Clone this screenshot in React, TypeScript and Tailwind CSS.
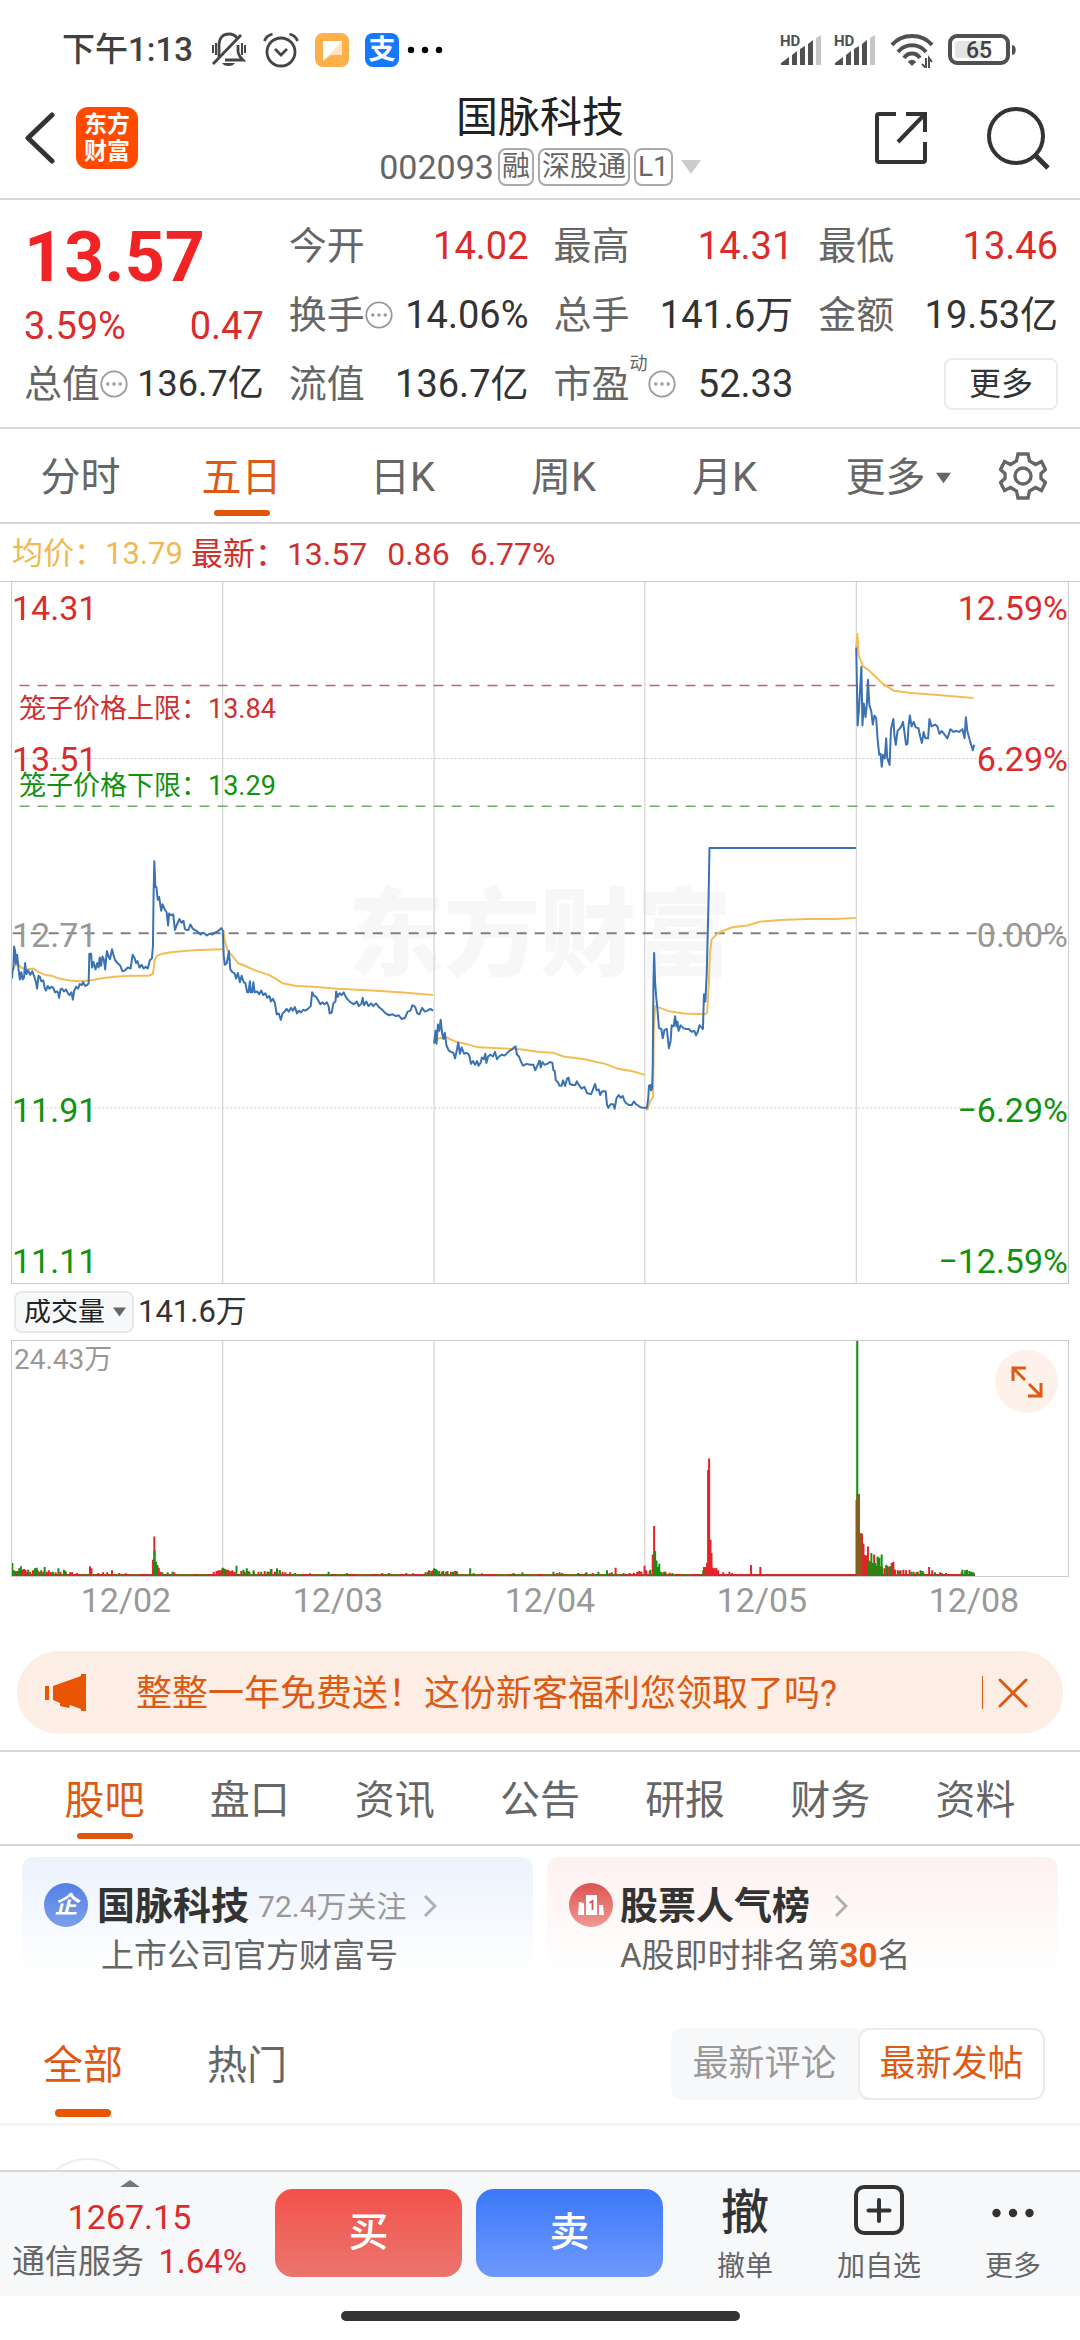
import React, { useState } from 'react';
import clsx from 'clsx';

// Chart units: one trading day is about 614 wide, price plot 1529 high, volume plot 708 high.
const HALF = 1568;
const DAY_LINES = [646, 1261, 1874, 2489];

const sessions = [
  {
    x: 0,
    avg: '33,868 50,858 60,866 75,870 95,868 110,876 130,882 150,884 170,890 200,894 230,896 260,894 290,890 330,886 380,884 430,884 443,880 448,850 455,840 470,836 500,832 560,828 646,826',
    price:
      '33,890 35,870 37,870 39,820 42,830 44,858 48,838 52,870 56,892 60,876 64,892 68,888 71,856 75,880 80,872 86,882 92,874 97,884 102,896 106,912 110,884 114,886 118,896 124,894 128,910 132,916 137,906 142,912 148,908 153,910 158,920 163,918 167,920 170,932 174,914 178,912 184,918 190,914 196,922 200,926 206,920 210,936 214,916 220,908 225,912 230,902 236,904 240,898 246,906 252,904 256,900 258,836 263,836 266,866 270,854 276,870 281,856 285,866 288,844 292,862 296,842 300,848 304,870 309,830 314,842 318,848 324,826 328,838 333,850 340,856 348,862 354,874 362,872 370,866 378,868 384,838 389,844 394,856 398,852 404,866 410,860 416,868 422,864 428,868 434,850 440,846 443,820 445,700 447,634 450,690 453,690 457,718 461,712 467,742 471,728 478,740 483,746 487,774 490,748 496,752 502,750 507,784 513,772 520,760 526,768 532,764 536,782 541,784 546,784 552,772 558,780 564,784 570,786 576,790 582,794 588,790 594,792 600,796 608,792 616,794 622,790 630,788 636,784 642,780 646,784',
  },
  {
    x: 0,
    avg: '648,784 652,808 660,828 680,846 690,856 710,862 740,872 780,882 800,890 820,900 860,906 910,908 980,912 1080,916 1160,920 1258,926',
    price:
      '646,784 649,840 652,860 658,856 664,830 668,870 674,876 680,878 685,890 690,878 696,898 701,884 707,898 712,900 717,920 721,920 725,896 728,920 732,920 735,898 739,920 746,918 752,924 758,916 764,926 770,922 776,932 782,928 786,940 792,934 798,944 803,968 809,966 815,980 820,966 826,962 832,956 838,962 845,954 850,960 856,952 862,966 868,960 874,964 880,958 886,960 894,956 902,950 906,920 912,928 918,930 924,938 930,946 936,942 942,946 949,942 954,950 957,966 963,964 968,944 974,940 976,918 980,930 986,922 992,926 998,920 1004,930 1010,936 1018,942 1028,946 1036,940 1042,950 1050,944 1053,932 1057,948 1064,940 1070,950 1078,944 1084,950 1092,944 1100,952 1110,958 1120,966 1130,970 1140,968 1150,972 1158,970 1166,978 1176,976 1184,962 1192,960 1198,948 1206,952 1212,966 1218,968 1226,954 1234,962 1242,960 1250,956 1258,960',
  },
  {
    x: 0,
    avg: '1261,1030 1275,1020 1295,1018 1325,1028 1360,1034 1390,1040 1450,1042 1510,1044 1568,1050 1608,1052 1638,1060 1698,1066 1758,1076 1793,1086 1838,1092 1874,1100',
    price:
      '1261,1032 1265,1004 1268,1032 1272,990 1276,1004 1280,980 1284,1008 1288,1022 1292,1008 1297,1036 1303,1046 1310,1050 1317,1052 1322,1064 1327,1046 1331,1030 1336,1054 1341,1040 1348,1054 1354,1052 1360,1054 1364,1060 1368,1076 1374,1070 1380,1078 1386,1070 1390,1080 1396,1074 1400,1062 1406,1066 1410,1054 1413,1074 1418,1060 1424,1056 1432,1060 1438,1050 1444,1066 1450,1060 1458,1056 1466,1058 1474,1052 1480,1048 1488,1044 1494,1040 1498,1038 1502,1056 1508,1060 1514,1072 1520,1080 1530,1076 1540,1078 1550,1078 1555,1090 1560,1082 1568,1068',
  },
  {
    x: HALF,
    avg: '306,1174 314,1176 322,1156 330,1148 332,1000 336,950 350,954 380,962 420,966 480,968 487,965 492,900 495,840 500,805 520,790 560,778 605,774 640,766 700,762 780,760 860,760 920,758',
    price:
      '0,1068 3,1084 8,1072 14,1078 22,1076 30,1072 37,1074 40,1090 44,1092 47,1112 53,1116 58,1124 64,1124 68,1112 74,1124 80,1108 84,1106 88,1120 96,1122 104,1122 108,1114 114,1122 122,1130 130,1126 138,1140 150,1142 156,1130 161,1120 166,1134 172,1132 176,1144 182,1136 192,1136 196,1166 200,1172 206,1164 214,1164 218,1174 224,1150 230,1144 236,1150 242,1146 246,1156 252,1162 260,1166 268,1166 274,1158 280,1164 288,1168 298,1172 312,1172 316,1150 318,1124 322,1122 324,1134 327,1130 329,1080 331,900 333,834 336,900 339,930 343,960 347,998 354,1000 358,1020 363,1002 370,1000 376,1042 381,1026 384,992 390,994 394,972 398,994 401,984 404,1004 410,992 418,998 426,1000 434,1000 442,1006 450,1004 455,1014 460,1006 465,992 470,996 475,1000 478,924 482,940 486,880 491,730 494,605 920,605',
  },
  {
    x: HALF,
    avg: '921,168 924,138 928,185 940,208 955,216 975,230 995,245 1030,262 1080,267 1150,271 1262,278',
    price:
      '921,168 925,338 929,300 932,262 936,210 939,338 943,290 948,320 952,290 955,238 959,292 965,308 969,336 974,316 979,322 983,368 988,402 992,400 995,428 999,402 1004,410 1008,366 1011,408 1018,424 1022,346 1029,324 1032,360 1036,380 1041,350 1046,346 1052,340 1057,330 1061,352 1066,380 1070,378 1073,340 1077,316 1082,340 1088,330 1094,342 1102,344 1107,362 1112,376 1117,352 1122,366 1130,366 1134,324 1140,340 1150,336 1157,340 1163,356 1170,350 1178,358 1186,366 1195,346 1204,352 1212,350 1220,352 1230,346 1236,366 1240,320 1244,350 1252,372 1260,392 1264,380',
  },
];

// x,top pairs of the volume bars
const volumes = [
  {
    x: 0,
    color: '#e0242a',
    bars: '38,872 44,874 48,876 62,870 68,868 72,870 78,876 86,876 94,872 108,872 114,876 124,876 134,876 140,872 146,878 160,878 174,876 190,878 202,878 208,878 222,880 260,860 264,866 284,880 298,878 310,878 324,872 345,880 364,881 443,840 447,770 456,856 460,864 465,876 505,878 620,876 628,874 634,872 640,872 645,866 656,870 662,870 668,874 674,872 680,876 700,874 710,876 720,874 736,876 750,876 768,874 780,876 788,868 798,876 812,872 820,876 828,878 842,878 900,881 1110,880 1180,880 1200,881 1242,876 1246,872 1254,874 1258,872 1270,872 1284,876 1296,876 1310,876 1322,874 1328,878 1400,881',
  },
  {
    x: 0,
    color: '#12920f',
    bars: '34,850 41,874 50,874 54,866 59,860 80,870 100,866 105,864 118,872 128,862 152,876 168,866 184,870 188,874 448,812 452,846 470,878 486,878 500,876 648,864 653,868 686,858 706,870 716,866 724,876 736,872 758,876 776,876 786,868 804,866 812,872 856,880 954,876 1007,880 1130,880 1236,878 1248,874 1261,866 1266,868 1276,874 1288,874 1300,874 1316,876 1326,874 1366,866 1376,880 1492,880 1518,878',
  },
  {
    x: HALF,
    color: '#e0242a',
    bars: '50,880 66,880 134,880 154,880 204,880 221,864 262,880 274,879 284,876 290,874 296,876 305,858 310,872 320,874 329,824 333,738 355,878 366,876 378,879 478,862 484,862 487,850 490,570 493,535 497,780 500,820 503,864 508,866 514,864 519,872 534,878 552,876 560,880 615,856 642,862 922,660 925,642 929,642 934,760 938,762 942,792 947,826 951,828 955,800 962,846 968,858 973,824 980,858 990,860 996,862 1003,866 1012,858 1018,862 1024,850 1029,846 1034,870 1042,872 1050,872 1058,870 1066,872 1076,870 1088,876 1100,876 1116,878 1133,862 1142,872 1165,878 1182,880 1228,876 1264,882',
  },
  {
    x: HALF,
    color: '#12920f',
    bars: '40,876 58,878 112,880 136,878 171,876 196,872 210,878 244,880 322,870 336,814 340,842 344,862 348,852 352,876 362,876 386,880 476,872 924,181 958,842 965,820 970,850 976,850 983,830 988,834 992,866 995,824 1008,856 1020,860 1046,874 1082,876 1096,878 1108,872 1114,874 1150,878 1170,880 1230,870 1238,872 1243,870 1250,874 1256,876 1262,878',
  },
];

const barPath = (bars: string) =>
  bars
    .split(' ')
    .map((b) => {
      const [x, top] = b.split(',');
      return `M${x} 889V${top}`;
    })
    .join('');

const axis = [
  { price: '14.31', pct: '12.59%', pos: 'top-[4px]', color: 'text-[#db2b2b]' },
  { price: '13.51', pct: '6.29%', pos: 'top-1/4 -translate-y-[20px]', color: 'text-[#db2b2b]' },
  { price: '12.71', pct: '0.00%', pos: 'top-1/2 -translate-y-[20px]', color: 'text-[#999]' },
  { price: '11.91', pct: '−6.29%', pos: 'top-3/4 -translate-y-[20px]', color: 'text-[#12920f]' },
  { price: '11.11', pct: '−12.59%', pos: 'bottom-0', color: 'text-[#12920f]' },
];

const Caret = ({ className }: { className?: string }) => (
  <svg viewBox="0 0 20 14" className={className} fill="currentColor" aria-hidden="true">
    <path d="M0 0h20L10 14z" />
  </svg>
);

const Info = () => (
  <svg viewBox="0 0 28 28" className="h-7 w-7 shrink-0" aria-hidden="true">
    <circle cx="14" cy="14" r="12.7" fill="none" stroke="#999" strokeWidth="1.8" />
    <g fill="#999">
      <circle cx="7.8" cy="14" r="1.7" />
      <circle cx="14" cy="14" r="1.7" />
      <circle cx="20.2" cy="14" r="1.7" />
    </g>
  </svg>
);

const Signal = () => (
  <svg viewBox="0 -4 42 36" className="h-9 w-[42px]" aria-hidden="true">
    <text x="0" y="12" fontSize="15" fontWeight="700" fill="#505050" fontFamily="Roboto, sans-serif">HD</text>
    <g fill="#505050">
      <path d="M1 31v-2l8-6v8z" />
      <path d="M12 21l5-4v14h-5z" />
      <path d="M20 15l5-3v19h-5z" />
      <path d="M28 10l5-4v25h-5z" />
    </g>
    <path d="M36 4l5-3v30h-5z" fill="#c6c6c6" />
  </svg>
);

function StatusBar() {
  return (
    <div className="flex h-[84px] items-end justify-between pl-[62px] pr-[62px] pb-[12px] text-[#404040]">
      <div className="flex items-center">
        <span className="w-[149px] text-[33px] leading-[44px] font-medium whitespace-nowrap">下午1:13</span>
        <svg viewBox="0 0 36 36" className="h-9 w-9" fill="none" stroke="#454545" strokeWidth="2.8" aria-hidden="true">
          <path d="M8 25V13C8 6 12 2 18 2c4 0 6 1 8 4M27 13v6c0 4 2 6 5 9H14" />
          <path d="M2 32L30 3" />
          <path d="M2 13v8M5 11v12M31 11v12M34 13v8" strokeWidth="2" />
          <path d="M11 31h13c-2 4-11 4-13 0z" fill="#454545" stroke="none" />
        </svg>
        <svg viewBox="0 0 36 36" className="ml-4 h-9 w-9" fill="none" stroke="#454545" strokeWidth="2.8" aria-hidden="true">
          <circle cx="18" cy="20" r="14" />
          <path d="M12 17l6 6 6-6" />
          <path d="M1.500 9c1-3 4-6 8-7M26.500 2c4 1 7 4 8 7" />
        </svg>
        <svg viewBox="0 0 34 34" className="ml-4 h-[34px] w-[34px]" aria-hidden="true">
          <rect width="34" height="34" rx="8" fill="#feb04a" />
          <path d="M8 8h19v14H16l-8 6z" fill="#ffe5c0" />
          <path d="M8 8h19L8 28z" fill="#fff" />
        </svg>
        <span className="ml-4 flex h-[34px] w-[34px] items-center justify-center rounded-lg bg-[#1677ff] text-[27px] leading-none font-bold text-white">支</span>
        <svg viewBox="0 0 36 8" className="ml-2 h-2 w-9" aria-hidden="true">
          <circle cx="4" cy="4" r="3.2" /><circle cx="18" cy="4" r="3.2" /><circle cx="32" cy="4" r="3.2" />
        </svg>
      </div>
      <div className="flex h-11 items-center">
        <div className="flex gap-3 pb-1">
          <Signal />
          <Signal />
        </div>
        <svg viewBox="0 0 44 36" className="ml-3.5 h-9 w-11" fill="none" stroke="#505050" strokeWidth="4" aria-hidden="true">
          <path d="M2 13c10-12 30-12 40 0M8 20c7-9 21-9 28 0M14 26c4-6 12-6 16 0" />
          <path d="M18 30c2-3 6-3 8 0l-4 4z" fill="#505050" stroke="none" />
          <path d="M36 26v10M32 32l4 4M39 36v-10l3 4" strokeWidth="2" />
        </svg>
        <svg viewBox="0 0 70 32" className="ml-3.5 h-8 w-[70px]" aria-hidden="true">
          <rect x="2" y="2" width="58" height="27" rx="7" fill="none" stroke="#505050" strokeWidth="4" />
          <rect x="7" y="7" width="30" height="17" rx="3" fill="#e4e4e4" />
          <path d="M64 11c5 0 5 10 0 10z" fill="#505050" />
          <text x="31" y="24" textAnchor="middle" fontSize="23" fontWeight="500" fill="#404040" fontFamily="Roboto, sans-serif">65</text>
        </svg>
      </div>
    </div>
  );
}

function Header() {
  const tag = 'flex h-[38px] items-center rounded-lg border-2 border-[#aaa] px-[2px] text-[28px] leading-none';
  return (
    <header className="grid grid-cols-[1fr_auto_1fr] border-b-2 border-[#d8d8d8] px-6 pb-[10px]">
      <div className="flex items-center gap-[21px] pt-[3px]">
        <button aria-label="返回">
          <svg viewBox="0 0 31 52" className="h-[52px] w-[31px]" fill="none" stroke="#333" strokeWidth="5" strokeLinecap="round" strokeLinejoin="round">
            <path d="M28 3L4 26l24 23" />
          </svg>
        </button>
        <div className="flex h-[62px] w-[62px] flex-col items-center justify-center rounded-xl bg-[#ff4a00] text-[23px] leading-[27px] font-bold text-white">
          <span>东方</span>
          <span>财富</span>
        </div>
      </div>
      <div className="text-center">
        <h1 className="pt-[6px] text-[42px] leading-[56px] text-[#222]">国脉科技</h1>
        <div className="flex items-center gap-1 text-[#666]">
          <span className="text-[34px] leading-[42px]">002093</span>
          <span className={tag}>融</span>
          <span className={tag}>深股通</span>
          <span className={tag}>L1</span>
          <Caret className="ml-1 h-[14px] w-5 text-[#ccc]" />
        </div>
      </div>
      <div className="flex items-center justify-end gap-[58px] pt-[3px] pr-[6px]">
        <button aria-label="分享">
          <svg viewBox="0 0 54 54" className="h-[54px] w-[54px]" fill="none" stroke="#333" strokeWidth="4">
            <path d="M22 3H5a2 2 0 0 0-2 2v44a2 2 0 0 0 2 2h44a2 2 0 0 0 2-2V31M32 3h19v18M24 31L50 4" />
          </svg>
        </button>
        <button aria-label="搜索">
          <svg viewBox="0 0 64 64" className="h-16 w-16" fill="none" stroke="#333" strokeWidth="4">
            <circle cx="30" cy="30" r="27" />
            <path d="M49 49l13 13" strokeWidth="5" />
          </svg>
        </button>
      </div>
    </header>
  );
}

interface StatProps {
  label: string;
  value: string;
  info?: boolean;
  sup?: string;
  color?: string;
}

function Stat({ label, value, info, sup, color = 'text-[#333]' }: StatProps) {
  return (
    <div className="flex h-[69px] items-center justify-between whitespace-nowrap">
      <dt className="flex items-center text-[#666]">
        {label}
        {sup && <sup className="-top-5 text-[18px]">{sup}</sup>}
        {info && <Info />}
      </dt>
      <dd className={color}>{value}</dd>
    </div>
  );
}

function Quote() {
  const red = 'text-[#db2b2b]';
  return (
    <section className="border-b-2 border-[#d8d8d8] pt-[11px] pb-[9px] text-[38px] leading-[46px]">
      <dl className="grid grid-cols-4 gap-x-[25px] pr-[22px] pl-6">
        <div>
          <div className="h-[92px] text-[70px] leading-[92px] font-bold text-[#f02424]">13.57</div>
          <div className={clsx('flex h-[46px] justify-between', red)}>
            <span>3.59%</span>
            <span>0.47</span>
          </div>
          <div className="flex h-[69px] items-center justify-between whitespace-nowrap">
            <dt className="flex items-center text-[#666]">总值<Info /></dt>
            <dd className="text-[36px] text-[#333]">136.7亿</dd>
          </div>
        </div>
        <div>
          <Stat label="今开" value="14.02" color={red} />
          <Stat label="换手" value="14.06%" info />
          <Stat label="流值" value="136.7亿" />
        </div>
        <div>
          <Stat label="最高" value="14.31" color={red} />
          <Stat label="总手" value="141.6万" />
          <Stat label="市盈" sup="动" value="52.33" info />
        </div>
        <div>
          <Stat label="最低" value="13.46" color={red} />
          <Stat label="金额" value="19.53亿" />
          <div className="flex h-[69px] items-center justify-end">
            <button className="h-[52px] w-[114px] rounded-lg border-2 border-[#ebebeb] text-[32px] leading-none text-[#333]">更多</button>
          </div>
        </div>
      </dl>
    </section>
  );
}

function Tab({ label, active, onClick }: { label: string; active: boolean; onClick: () => void }) {
  return (
    <button
      onClick={onClick}
      className={clsx('flex flex-1 flex-col items-center pt-5', active ? 'text-[#dd5a14]' : 'text-[#666]')}
    >
      <span className="text-[40px] leading-[58px]">{label}</span>
      <span className={clsx('mt-[3px] h-[6px] w-[56px] rounded-full', active && 'bg-[#e2550c]')} />
    </button>
  );
}

function PeriodTabs() {
  const [active, setActive] = useState('五日');
  return (
    <nav className="flex h-[95px] border-b-2 border-[#d8d8d8]">
      {['分时', '五日', '日K', '周K', '月K'].map((t) => (
        <Tab key={t} label={t} active={t === active} onClick={() => setActive(t)} />
      ))}
      <button aria-haspopup="menu" className="flex w-[180px] items-center justify-center gap-2.5 pt-1 pl-[6px] text-[40px] text-[#666]">
        更多
        <Caret className="h-3 w-[15px]" />
      </button>
      <button aria-label="设置" className="w-[95px] pl-[14px]">
        <svg viewBox="0 0 48 50" className="h-[50px] w-12" fill="none" stroke="#666" strokeWidth="3.400" strokeLinejoin="miter">
          <path d="M19 3h10l1.500 7 6 3.500 6-3 4 8-4.500 4v5l4.500 4-4 8-6-3-6 3.500-1.500 7H19l-1.500-7-6-3.500-6 3-4-8 4.500-4v-5l-4.500-4 4-8 6 3 6-3.500z" />
          <circle cx="24" cy="25" r="8" />
        </svg>
      </button>
    </nav>
  );
}

function PriceChart() {
  return (
    <section>
      <div className="flex h-[58px] items-center border-b border-[#ccc] pt-[3px] pl-3 text-[32px] leading-[44px] text-[#cf3030]">
        <span className="mr-2 text-[31px] text-[#f0b94f]">均价：13.79</span>
        <span>最新：13.57</span>
        <span className="ml-5">0.86</span>
        <span className="ml-5">6.77%</span>
      </div>
      <div className="px-[11px]">
        <div className="relative h-[702px] border-x border-b border-[#ccc]">
          <div className="absolute inset-0 flex items-center justify-center pt-1 text-[96px] font-black text-[#f7f7f7]">东方财富</div>
          <svg viewBox="33 25 3072 1529" preserveAspectRatio="none" className="absolute inset-0 h-full w-full" fill="none" role="img" aria-label="五日分时走势">
            <g stroke="#ccc" strokeWidth="1">
              {DAY_LINES.map((x) => (
                <path key={x} d={`M${x} 25V1554`} vectorEffect="non-scaling-stroke" />
              ))}
            </g>
            <path d="M40 410H3105M40 1172H3105" stroke="#ccc" strokeWidth="1" strokeDasharray="2 2" vectorEffect="non-scaling-stroke" />
            <path d="M55 251H3065" stroke="#bf6565" strokeWidth="1.500" strokeDasharray="10 8" vectorEffect="non-scaling-stroke" />
            <path d="M55 514H3065" stroke="#68ad68" strokeWidth="1.500" strokeDasharray="10 8" vectorEffect="non-scaling-stroke" />
            <path d="M35 791H3090" stroke="#808080" strokeWidth="2" strokeDasharray="10 8" vectorEffect="non-scaling-stroke" />
            {sessions.map((s) => (
              <g key={s.avg} transform={`translate(${s.x})`} strokeLinejoin="round">
                <polyline points={s.avg} stroke="#f3bd54" strokeWidth="2" vectorEffect="non-scaling-stroke" />
                <polyline points={s.price} stroke="#3a72b4" strokeWidth="2" vectorEffect="non-scaling-stroke" />
              </g>
            ))}
          </svg>
          {axis.map((a) => (
            <div key={a.price} className={clsx('absolute inset-x-0 flex justify-between text-[34px] leading-[44px]', a.pos, a.color)}>
              <span>{a.price}</span>
              <span>{a.pct}</span>
            </div>
          ))}
          <div className="absolute top-[107px] left-[7px] text-[27px] leading-[40px] text-[#cf3030]">笼子价格上限：13.84</div>
          <div className="absolute top-[184px] left-[7px] text-[27px] leading-[40px] text-[#12920f]">笼子价格下限：13.29</div>
        </div>
      </div>
    </section>
  );
}

function VolumeChart() {
  return (
    <section className="pl-[11px]">
      <div className="flex h-[56px] items-center gap-1 pl-[3px]">
        <label className="relative flex items-center text-[#666]">
          <select aria-label="副图指标" className="h-[42px] w-[120px] appearance-none rounded-lg border-2 border-[#e6e8ec] bg-[#f7f8fa] pl-[8px] text-[27px] leading-none text-[#222]">
            <option>成交量</option>
            <option>MACD</option>
            <option>KDJ</option>
          </select>
          <Caret className="pointer-events-none absolute right-2 h-3 w-[13px]" />
        </label>
        <span className="text-[31px] leading-[42px] text-[#333]">141.6万</span>
      </div>
      <div className="relative mr-[11px] h-[237px] border border-[#ccc]">
        <svg viewBox="33 181 3072 708" preserveAspectRatio="none" className="absolute inset-0 h-full w-full" fill="none" role="img" aria-label="成交量">
          {DAY_LINES.map((x) => (
            <path key={x} d={`M${x} 181V889`} stroke="#ccc" strokeWidth="1" vectorEffect="non-scaling-stroke" />
          ))}
          <path d="M33 886H2833" stroke="#cb2a2a" strokeWidth="2" vectorEffect="non-scaling-stroke" />
          <path d="M33 886H2060" stroke="#7a6512" strokeWidth="2" strokeDasharray="14 7 22 5 9 12" vectorEffect="non-scaling-stroke" />
          {volumes.map((v, i) => (
            <path key={i} transform={`translate(${v.x})`} d={barPath(v.bars)} stroke={v.color} strokeWidth="2" vectorEffect="non-scaling-stroke" />
          ))}
          <path d="M2488 889V660h4V643h7v117h6v129z" fill="#86601a" />
        </svg>
        <span className="absolute top-0 left-[2px] text-[28px] leading-[38px] text-[#999]">24.43万</span>
        <button aria-label="全屏" className="absolute top-[9px] right-[10px] flex h-[63px] w-[63px] items-center justify-center rounded-full bg-[#fdf1ea]">
          <svg viewBox="0 0 32 32" className="h-8 w-8" fill="none" stroke="#dd5a14" strokeWidth="3">
            <path d="M2 15V2h13M2 2l12 12M30 17v13H17M30 30L18 18" />
          </svg>
        </button>
      </div>
      <div className="grid h-[74px] grid-cols-5 pl-[9px] text-center text-[34px] leading-[46px] text-[#999]">
        <span>12/02</span>
        <span>12/03</span>
        <span>12/04</span>
        <span>12/05</span>
        <span>12/08</span>
      </div>
    </section>
  );
}

function Promo() {
  return (
    <div className="mx-[17px] mb-4 flex h-[83px] items-center rounded-full bg-[#fceee5] pr-[35px] pl-7 text-[#dd5a14]">
      <svg viewBox="0 0 42 38" className="h-[38px] w-[42px]" fill="#e95504" aria-hidden="true">
        <path d="M0 12h4v14H0zM8 12L36 2V0h5v37h-5v-2l-11-4-1 3-9-2v-3l-7-3z" />
      </svg>
      <a href="#promo" className="ml-[49px] flex-1 pt-[3px] text-[36px] leading-[48px]">整整一年免费送！这份新客福利您领取了吗?</a>
      <span className="h-[33px] w-px bg-[#dd5a14]" />
      <button aria-label="关闭" className="ml-[15px]">
        <svg viewBox="0 0 30 30" className="h-[30px] w-[30px]" stroke="#dd5a14" strokeWidth="3" strokeLinecap="round">
          <path d="M2 2l26 26M28 2L2 28" />
        </svg>
      </button>
    </div>
  );
}

function SectionTabs() {
  const [active, setActive] = useState('股吧');
  return (
    <nav className="flex h-[96px] border-y-2 border-[#d8d8d8] px-8">
      {['股吧', '盘口', '资讯', '公告', '研报', '财务', '资料'].map((t) => (
        <Tab key={t} label={t} active={t === active} onClick={() => setActive(t)} />
      ))}
    </nav>
  );
}

const Chevron = () => (
  <svg viewBox="0 0 14 24" className="h-6 w-3.5" fill="none" stroke="#b0b0b0" strokeWidth="3" aria-hidden="true">
    <path d="M2 2l10 10L2 22" />
  </svg>
);

function Cards() {
  return (
    <div className="grid grid-cols-2 gap-[14px] px-[22px] pt-[11px]">
      <a href="#company" className="flex h-[119px] gap-[9px] rounded-xl bg-linear-to-b from-[#ebf3fd] to-white pt-[22px] pl-[22px]">
        <span className="mt-[4px] flex h-11 w-11 shrink-0 items-center justify-center rounded-full bg-linear-to-b from-[#557fe6] to-[#7ba0ea] text-[24px] font-bold text-white italic">企</span>
        <span>
          <span className="flex items-center whitespace-nowrap">
            <b className="text-[38px] leading-[54px] text-[#333]">国脉科技</b>
            <span className="mr-4 ml-[9px] text-[30px] text-[#999]">72.4万关注</span>
            <Chevron />
          </span>
          <span className="block pl-1 text-[33px] leading-[46px] text-[#666]">上市公司官方财富号</span>
        </span>
      </a>
      <a href="#rank" className="flex h-[119px] gap-[7px] rounded-xl bg-linear-to-b from-[#fef1f0] to-white pt-[22px] pl-[22px]">
        <svg viewBox="0 0 44 44" className="mt-[4px] h-11 w-11 shrink-0" aria-hidden="true">
          <defs>
            <linearGradient id="rank" x2="0" y2="1">
              <stop stopColor="#dc5450" />
              <stop offset="1" stopColor="#f09a96" />
            </linearGradient>
          </defs>
          <circle cx="22" cy="22" r="22" fill="url(#rank)" />
          <path d="M10 19l5 1v12H9zM17 12h11v20H17zM30 22h4l1 10h-5z" fill="#fff" />
          <path d="M20.500 20l3-2v9" fill="none" stroke="#dc5450" strokeWidth="1.800" />
        </svg>
        <span>
          <span className="flex items-center whitespace-nowrap">
            <b className="mr-6 text-[38px] leading-[54px] text-[#333]">股票人气榜</b>
            <Chevron />
          </span>
          <span className="block text-[33px] leading-[46px] text-[#666]">
            A股即时排名第<b className="text-[#ea5a14]">30</b>名
          </span>
        </span>
      </a>
    </div>
  );
}

function Feed() {
  const [sort, setSort] = useState('最新发帖');
  return (
    <section className="min-h-0 flex-1 overflow-hidden">
      <div className="flex items-center justify-between border-b-3 border-[#f5f6f7] pr-[35px] pl-[43px]">
        <div className="flex gap-[84px] pt-[60px] text-[40px] leading-[60px]">
          <button className="flex flex-col items-center text-[#dd5a14]">
            全部
            <span className="mt-[13px] mb-[6px] h-2 w-[56px] rounded-full bg-[#ea5504]" />
          </button>
          <button className="self-start text-[#666]">热门</button>
        </div>
        <div className="mt-[28px] flex h-[72px] rounded-xl bg-[#f7f8fa] text-[36px]">
          {['最新评论', '最新发帖'].map((s) => (
            <button
              key={s}
              onClick={() => setSort(s)}
              className={clsx(
                'w-[187px] rounded-xl border-2',
                s === sort ? 'border-[#ebebeb] bg-white text-[#dd5a14]' : 'border-transparent text-[#999]',
              )}
            >
              {s}
            </button>
          ))}
        </div>
      </div>
      <div className="pt-8 pl-[35px]">
        <div className="h-[106px] w-[106px] rounded-full border-2 border-[#eee]" />
      </div>
    </section>
  );
}

function TradeBar() {
  const action = 'flex flex-1 flex-col items-center text-[28px] leading-[40px] text-[#666]';
  return (
    <footer>
      <div className="flex h-[126px] border-t-2 border-[#d8d8d8] bg-[#f7f8fa]">
        <button className="flex w-[247px] flex-col items-center pt-[8px] pl-3 whitespace-nowrap">
          <svg viewBox="0 0 20 7" className="h-[7px] w-5" fill="#76777b" aria-hidden="true">
            <path d="M10 0l10 7H0z" />
          </svg>
          <span className="mt-[6px] text-[34px] leading-[48px] text-[#db2b2b]">1267.15</span>
          <span className="flex w-full justify-between text-[33px] leading-[42px]">
            <span className="text-[#666]">通信服务</span>
            <span className="text-[#db2b2b]">1.64%</span>
          </span>
        </button>
        <div className="ml-7 flex gap-[14px] pt-[17px] text-[40px] font-medium text-white">
          <button className="h-[88px] w-[187px] rounded-[18px] bg-linear-to-b from-[#f25149] to-[#eb746e]">买</button>
          <button className="h-[88px] w-[187px] rounded-[18px] bg-linear-to-b from-[#3b78f8] to-[#6d99fd]">卖</button>
        </div>
        <div className="flex flex-1 pt-[13px] pl-[15px]">
          <button className={action}>
            <span className="h-[62px] text-[48px] leading-[56px] font-medium text-[#333]">撤</span>
            撤单
          </button>
          <button className={action}>
            <svg viewBox="0 0 50 50" className="mb-3 h-[50px] w-[50px]" fill="none" stroke="#333" strokeWidth="4" strokeLinecap="round" aria-hidden="true">
              <rect x="2" y="2" width="46" height="46" rx="8" />
              <path d="M25 15v21M14.500 25.500h21" />
            </svg>
            加自选
          </button>
          <button className={action}>
            <svg viewBox="0 0 42 50" className="mb-3 h-[50px] w-[42px]" fill="#333" aria-hidden="true">
              <circle cx="4.500" cy="28" r="4.200" />
              <circle cx="21" cy="28" r="4.200" />
              <circle cx="37.500" cy="28" r="4.200" />
            </svg>
            更多
          </button>
        </div>
      </div>
      <div className="flex h-[44px] justify-center bg-white pt-[15px]">
        <div className="h-[10px] w-[399px] rounded-full bg-[#333]" />
      </div>
    </footer>
  );
}

export default function App() {
  return (
    <div className="flex h-screen flex-col overflow-hidden bg-white font-[Roboto,'Noto_Sans_CJK_SC',sans-serif]">
      <StatusBar />
      <Header />
      <Quote />
      <PeriodTabs />
      <PriceChart />
      <VolumeChart />
      <Promo />
      <SectionTabs />
      <Cards />
      <Feed />
      <TradeBar />
    </div>
  );
}
